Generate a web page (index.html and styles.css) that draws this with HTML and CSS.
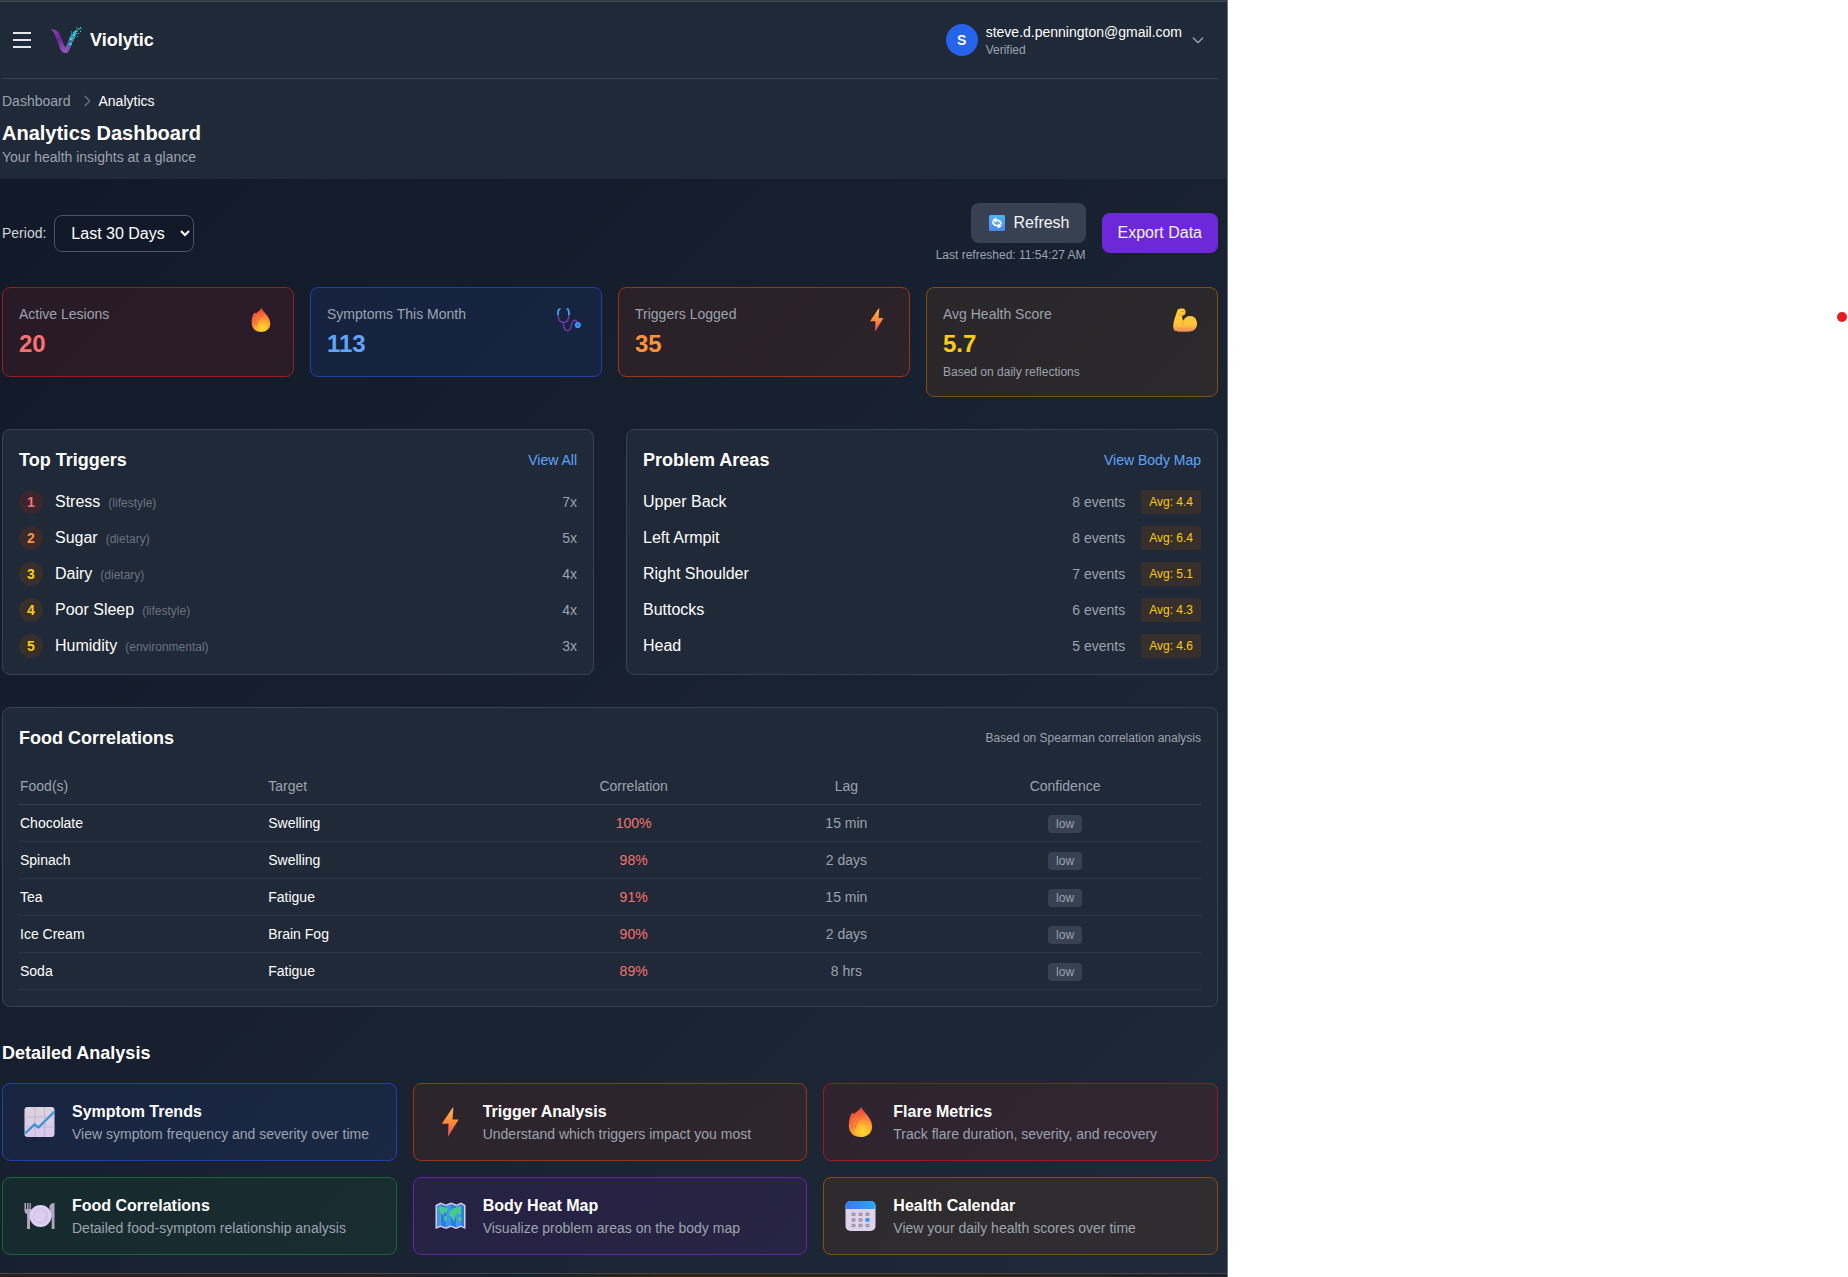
FILE: index.html
```html
<!DOCTYPE html>
<html lang="en">
<head>
<meta charset="utf-8">
<meta name="viewport" content="width=device-width, initial-scale=1">
<title>Analytics Dashboard - Violytic</title>
<link rel="stylesheet" href="styles.css">
</head>
<body>
<svg class="sprite" aria-hidden="true">
  <defs>
    <radialGradient id="g-fire" gradientUnits="userSpaceOnUse" cx="14" cy="20" r="19">
      <stop offset="0" stop-color="#ffdc32"/><stop offset=".3" stop-color="#ffb431"/><stop offset=".6" stop-color="#fb7d3a"/><stop offset="1" stop-color="#e8403c"/>
    </radialGradient>
    <linearGradient id="g-bolt" x1="0" y1="0" x2="0" y2="1">
      <stop offset="0" stop-color="#ffb844"/><stop offset=".5" stop-color="#ff8a3c"/><stop offset="1" stop-color="#f0405a"/>
    </linearGradient>
    <linearGradient id="g-arm" x1="0" y1="0" x2="0" y2="1">
      <stop offset="0" stop-color="#ffcf33"/><stop offset=".7" stop-color="#ffc43c"/><stop offset="1" stop-color="#e8895a"/>
    </linearGradient>
    <linearGradient id="g-paper" x1="0" y1="0" x2="0" y2="1">
      <stop offset="0" stop-color="#dcd3dd"/><stop offset="1" stop-color="#d9c8f0"/>
    </linearGradient>
    <linearGradient id="g-blue" x1="0" y1="0" x2="1" y2="0">
      <stop offset="0" stop-color="#3a78f0"/><stop offset="1" stop-color="#2aa8fb"/>
    </linearGradient>
    <linearGradient id="g-ref" x1="0" y1="0" x2="0" y2="1">
      <stop offset="0" stop-color="#4fb4f8"/><stop offset="1" stop-color="#4a86ee"/>
    </linearGradient>
    <linearGradient id="g-v1" x1="0" y1="0" x2=".6" y2="1">
      <stop offset="0" stop-color="#9a3fb4"/><stop offset=".5" stop-color="#672a96"/><stop offset="1" stop-color="#8f55b8"/>
    </linearGradient>
    <linearGradient id="g-v2" gradientUnits="userSpaceOnUse" x1="17" y1="28" x2="28" y2="5">
      <stop offset="0" stop-color="#8350b4"/><stop offset=".4" stop-color="#4b6fae"/><stop offset="1" stop-color="#27c6c4"/>
    </linearGradient>
  </defs>
  <symbol id="i-fire" viewBox="0 0 24 24">
    <path fill="url(#g-fire)" d="M12.6 0C14 4 21.3 8.500 21.300 15.500C21.300 21 17 24 12 24S2.700 21 2.700 15C2.700 11 3.600 6.500 5.200 5C6 4.600 6.800 4.900 7.300 5.700C7.800 3.800 10.600 3.200 12.600 0Z"/>
    <path fill="none" stroke="#f0503c" stroke-width=".8" stroke-linecap="round" d="M13 5C10 8 5.500 11 5.200 17M7.300 5.800C6.500 8.500 4.200 10 3.800 14M14 7C11 10 8 12 7.500 17"/>
  </symbol>
  <symbol id="i-steth" viewBox="0 0 24 24">
    <path fill="none" stroke="#7038a4" stroke-width="1.500" d="M1 6C1 11 3 14.500 6.500 14.500S12 11 12 6M6.500 14.500C6.500 20 7.500 22.700 10.500 22.700C15.500 22.700 13.500 12.300 17.500 12.300C19.500 12.300 20 14 20.700 16"/>
    <path fill="none" stroke="#39a6f5" stroke-width="1.800" d="M3.500 1.200C1.500 .800 1 2 1 7M9.500 1.200C11.500 .800 12 2 12 7"/>
    <circle cx="20.800" cy="17" r="3.100" fill="#3a93fb"/><circle cx="20.800" cy="17" r="1.200" fill="#2a6be0"/>
  </symbol>
  <symbol id="i-bolt" viewBox="0 0 24 24">
    <path fill="url(#g-bolt)" d="M13.800 .300L5 13.300H10.400L10 23.700L18.500 10H13.600L14.300 .600Z"/>
  </symbol>
  <symbol id="i-arm" viewBox="0 0 24 24">
    <path fill="url(#g-arm)" d="M4.500 2C5.500 .300 10.500 0 11.800 1.500C13 3 12.800 6 11.300 7L9.300 7.500C8.800 9.500 9.500 11.500 10.500 12.500C11.800 9.500 14 8 17 8C21.500 8 24 11.500 24 15.500C24 20.500 21 23.700 15 23.700H6C2 23.700 .200 22 .200 18.500C.200 12.500 2.800 8 4.500 2Z"/>
    <path fill="none" stroke="#e8952c" stroke-width=".9" stroke-linecap="round" d="M6 6.500C8 7.600 10 7.300 11.500 6.600M10.500 12.500C9.300 14 9 15.500 9.500 17M8.500 3.500H11"/>
  </symbol>
  <symbol id="i-refresh" viewBox="0 0 16 16">
    <rect width="16" height="16" rx="1.500" fill="url(#g-ref)"/>
    <path fill="none" stroke="#fff" stroke-width="1.800" d="M12.200 9.500C12 6.500 10.500 5.200 6.500 5.200M3.800 6.500C4 9.500 5.500 10.800 9.500 10.800"/>
    <path fill="#fff" d="M3.200 5.200L7.200 2.300V8ZM12.800 10.800L8.800 8V13.700Z"/>
  </symbol>
  <symbol id="i-chart" viewBox="0 0 30 30">
    <rect width="30" height="30" rx="3" fill="url(#g-paper)"/>
    <path stroke="#c3b9ca" stroke-width="1.200" d="M10.500 0V30M20 0V30M0 10H30M0 20H30"/>
    <path fill="none" stroke="#3a93d8" stroke-width="2.300" d="M.5 26.500L10 17.500L14 20.500L30 4.500"/>
  </symbol>
  <symbol id="i-plate" viewBox="0 0 30 30">
    <path fill="#b3a6bd" d="M0 2H1.500V8H2.600V2H4V8H5V2H6.300V8H7.300V10C7.300 11.500 6.500 12.500 5.500 13V28H2.600V13C1 12.500 0 11.500 0 10ZM30 2V28H27.200V16H25V6C25 3.500 27 2 30 2Z"/>
    <circle cx="16" cy="15" r="11" fill="#dccff0"/><circle cx="16" cy="15" r="7.500" fill="#cdbde2"/><circle cx="15.500" cy="15" r="6.500" fill="#dccdf0"/>
  </symbol>
  <symbol id="i-map" viewBox="0 0 30 30">
    <path fill="#d9cce6" d="M0 4L5 1.500L10.500 3.500L15.500 1.500L21 3.500L25.500 1.500L30 4V28L25.500 26L20.500 28L15.500 26L10.500 28L5 26L0 28Z"/>
    <path fill="#3c97f0" d="M1.500 5L5 3V24.500L1.500 26ZM10.500 5L15.500 3V24.500L10.500 26.500ZM20.700 5L25.500 3V24.500L20.700 26.500Z"/>
    <path fill="#2c7ed8" d="M5 3L10.500 5V26.500L5 24.500ZM15.500 3L20.700 5V26.500L15.500 24.500ZM25.500 3L28.500 5V26L25.500 24.500Z"/>
    <path fill="#45c98c" d="M3 7L6 5.500L10 6.500L12.500 8L11 11L8.500 12L8 14.500L5.500 12.500L4 9.500ZM8.500 15L11.500 16L11 19L9.500 21L8.500 18ZM14 11L17 7.500L21 6.500L25.500 5.500L26 12L24 14L21 12.500L20 16L18 20.500L16 16L13.500 14.500ZM22.500 16H26V20H22.500Z"/>
  </symbol>
  <symbol id="i-calendar" viewBox="0 0 30 30">
    <rect width="30" height="30" rx="5" fill="#e0d4ec"/>
    <path fill="url(#g-blue)" d="M0 8V5Q0 0 5 0H25Q30 0 30 5V8Z"/>
    <path fill="#a698ae" d="M6 11.500H10V15H6ZM13 11.500H17V15H13ZM20 11.500H24V15H20ZM6 17.200H10V20.700H6ZM13 17.200H17V20.700H13ZM6 22.800H10V26.300H6ZM13 22.800H17V26.300H13ZM20 22.800H24V26.300H20Z"/>
    <path fill="#2e90fa" d="M20 17.200H24V20.700H20Z"/>
  </symbol>
</svg>

<div class="page">
  <div class="app">
    <div class="edge edge-top"></div>
    <header class="header">
      <div class="topbar">
        <button class="menu-btn" type="button" aria-label="Open menu">
          <svg width="24" height="24" viewBox="0 0 24 24" fill="none" stroke="#e5e7eb" stroke-width="2"><path d="M3 5H21M3 12H21M3 19H21"/></svg>
        </button>
        <a class="brand" href="#">
          <svg width="32" height="32" viewBox="0 0 32 32" aria-hidden="true">
            <path fill="url(#g-v2)" d="M13.500 26C17 22 18 17 19.500 13C21 9 24 6.500 28 5.500C27 10 24.500 15 22.500 19C20 24 19 28.500 15.500 29Z"/>
            <path fill="url(#g-v1)" d="M.5 5.500C5 5 8 6.500 9.500 10L14.500 22C15.300 24 16.500 26 19 26.500C18 28.500 16.500 29 15 28.900C12.500 28.700 11 27 10 24.500L5 11.500C4 9 3 6.500 .5 5.500Z"/>
            <path fill="#212b3b" d="M20 11h1v1h-1zM24 15h1v1h-1zM22 9h1v1h-1zM25 11h1v1h-1zM22 18h1v1h-1zM26 8h1v1h-1zM19 17h1v1h-1z"/>
            <path fill="#35e0d6" d="M28 4h1.500v1.500H28zM30.500 4.500h1v1h-1zM30 7h1v1h-1zM28 9h1v1h-1zM26 3.500h1v1h-1zM27 12h1v1h-1zM23 10h2v2h-2zM20 14h2v2h-2zM19.500 19h2v2h-2zM25 7h1.500v1.500H25zM22.500 14h1v1h-1zM30 3h1v1h-1zM21 7.500h1v1h-1z"/>
          </svg>
          <span>Violytic</span>
        </a>
        <button class="user" type="button">
          <span class="avatar">S</span>
          <span class="user-text">
            <span class="user-mail">steve.d.pennington@gmail.com</span>
            <span class="user-state">Verified</span>
          </span>
          <svg width="16" height="16" viewBox="0 0 24 24" fill="none" stroke="#9ca3af" stroke-width="2" stroke-linecap="round" stroke-linejoin="round"><path d="M19 9l-7 7-7-7"/></svg>
        </button>
      </div>
      <div class="heading">
        <nav class="crumbs" aria-label="Breadcrumb">
          <a href="#">Dashboard</a>
          <svg width="16" height="16" viewBox="0 0 24 24" fill="none" stroke="#6b7280" stroke-width="2" stroke-linecap="round" stroke-linejoin="round"><path d="M9 5l7 7-7 7"/></svg>
          <span>Analytics</span>
        </nav>
        <h1>Analytics Dashboard</h1>
        <p>Your health insights at a glance</p>
      </div>
    </header>

    <main class="main">
      <div class="toolbar">
        <div class="period">
          <label for="period">Period:</label>
          <select id="period"><option>Last 30 Days</option></select>
        </div>
        <div class="actions">
          <div class="refresh">
            <button class="btn btn-gray" type="button"><svg width="16" height="16"><use href="#i-refresh"/></svg>Refresh</button>
            <span>Last refreshed: 11:54:27 AM</span>
          </div>
          <button class="btn btn-violet" type="button">Export Data</button>
        </div>
      </div>

      <section class="stats">
        <div class="stat red">
          <div><p class="stat-label">Active Lesions</p><p class="stat-value">20</p></div>
          <svg class="stat-icon"><use href="#i-fire"/></svg>
        </div>
        <div class="stat blue">
          <div><p class="stat-label">Symptoms This Month</p><p class="stat-value">113</p></div>
          <svg class="stat-icon"><use href="#i-steth"/></svg>
        </div>
        <div class="stat orange">
          <div><p class="stat-label">Triggers Logged</p><p class="stat-value">35</p></div>
          <svg class="stat-icon"><use href="#i-bolt"/></svg>
        </div>
        <div class="stat yellow">
          <div><p class="stat-label">Avg Health Score</p><p class="stat-value">5.7</p><p class="stat-note">Based on daily reflections</p></div>
          <svg class="stat-icon"><use href="#i-arm"/></svg>
        </div>
      </section>

      <div class="panels">
        <section class="panel">
          <div class="panel-head"><h2>Top Triggers</h2><a href="#">View All</a></div>
          <ol class="rows">
            <li><span class="rank rank-1">1</span><span class="name">Stress</span><small>(lifestyle)</small><span class="count">7x</span></li>
            <li><span class="rank rank-2">2</span><span class="name">Sugar</span><small>(dietary)</small><span class="count">5x</span></li>
            <li><span class="rank">3</span><span class="name">Dairy</span><small>(dietary)</small><span class="count">4x</span></li>
            <li><span class="rank">4</span><span class="name">Poor Sleep</span><small>(lifestyle)</small><span class="count">4x</span></li>
            <li><span class="rank">5</span><span class="name">Humidity</span><small>(environmental)</small><span class="count">3x</span></li>
          </ol>
        </section>
        <section class="panel">
          <div class="panel-head"><h2>Problem Areas</h2><a href="#">View Body Map</a></div>
          <ul class="rows">
            <li><span class="name">Upper Back</span><span class="count">8 events</span><span class="avg">Avg: 4.4</span></li>
            <li><span class="name">Left Armpit</span><span class="count">8 events</span><span class="avg">Avg: 6.4</span></li>
            <li><span class="name">Right Shoulder</span><span class="count">7 events</span><span class="avg">Avg: 5.1</span></li>
            <li><span class="name">Buttocks</span><span class="count">6 events</span><span class="avg">Avg: 4.3</span></li>
            <li><span class="name">Head</span><span class="count">5 events</span><span class="avg">Avg: 4.6</span></li>
          </ul>
        </section>
      </div>

      <section class="panel">
        <div class="panel-head"><h2>Food Correlations</h2><span>Based on Spearman correlation analysis</span></div>
        <table class="foods">
          <colgroup><col class="c-food"><col class="c-target"><col class="c-corr"><col class="c-lag"><col class="c-conf"></colgroup>
          <thead>
            <tr><th scope="col">Food(s)</th><th scope="col">Target</th><th scope="col">Correlation</th><th scope="col">Lag</th><th scope="col">Confidence</th></tr>
          </thead>
          <tbody>
            <tr><td>Chocolate</td><td>Swelling</td><td class="corr">100%</td><td class="lag">15 min</td><td><span class="low">low</span></td></tr>
            <tr><td>Spinach</td><td>Swelling</td><td class="corr">98%</td><td class="lag">2 days</td><td><span class="low">low</span></td></tr>
            <tr><td>Tea</td><td>Fatigue</td><td class="corr">91%</td><td class="lag">15 min</td><td><span class="low">low</span></td></tr>
            <tr><td>Ice Cream</td><td>Brain Fog</td><td class="corr">90%</td><td class="lag">2 days</td><td><span class="low">low</span></td></tr>
            <tr><td>Soda</td><td>Fatigue</td><td class="corr">89%</td><td class="lag">8 hrs</td><td><span class="low">low</span></td></tr>
          </tbody>
        </table>
      </section>

      <section class="details">
        <h2>Detailed Analysis</h2>
        <div class="links">
          <a class="link blue" href="#"><svg><use href="#i-chart"/></svg><div><h3>Symptom Trends</h3><p>View symptom frequency and severity over time</p></div></a>
          <a class="link orange" href="#"><svg><use href="#i-bolt"/></svg><div><h3>Trigger Analysis</h3><p>Understand which triggers impact you most</p></div></a>
          <a class="link red" href="#"><svg><use href="#i-fire"/></svg><div><h3>Flare Metrics</h3><p>Track flare duration, severity, and recovery</p></div></a>
          <a class="link green" href="#"><svg><use href="#i-plate"/></svg><div><h3>Food Correlations</h3><p>Detailed food-symptom relationship analysis</p></div></a>
          <a class="link purple" href="#"><svg><use href="#i-map"/></svg><div><h3>Body Heat Map</h3><p>Visualize problem areas on the body map</p></div></a>
          <a class="link yellow" href="#"><svg><use href="#i-calendar"/></svg><div><h3>Health Calendar</h3><p>View your daily health scores over time</p></div></a>
        </div>
      </section>
    </main>
    <div class="edge edge-bottom"></div>
  </div>
  <aside class="side"><span class="dot"></span></aside>
</div>
</body>
</html>
```
FILE: styles.css
```css
* {
  box-sizing: border-box;
  margin: 0;
  padding: 0;
}

body {
  background: #fff;
  color: #f3f4f6;
  font: 16px/24px "Liberation Sans", Arial, sans-serif;
}

a {
  color: inherit;
  text-decoration: none;
}

button,
select {
  font: inherit;
  color: inherit;
}

button {
  border: 0;
  background: none;
  cursor: pointer;
}

svg {
  display: block;
  flex: none;
}

ol,
ul {
  list-style: none;
}

.sprite {
  position: absolute;
  width: 0;
  height: 0;
}

.page {
  display: grid;
  grid-template-columns: 1228fr 620fr;
}

.app {
  border-right: 1px solid #6b7280;
  background: linear-gradient(135deg, #111827, #1f2937);
}

.edge-top {
  height: 2px;
  background: #283f3c;
  border-bottom: 1px solid #3d4853;
}

.edge-bottom {
  height: 4px;
  background: linear-gradient(90deg, #2c201e, #2a1f20 30%, #14222c 42%, #33240f 55%, #2a2318 80%, #1e1f26);
  border-top: 1px solid #45474c;
}

/* Header */

.header {
  padding: 0 9px 0 2px;
  background: #1f2937;
}

.topbar {
  display: flex;
  align-items: center;
  height: 77px;
  border-bottom: 1px solid #374151;
}

.menu-btn {
  padding: 8px;
}

.brand {
  display: flex;
  align-items: center;
  gap: 8px;
  margin-left: 8px;
  color: #fff;
  font-size: 18px;
  font-weight: 700;
}

.user {
  display: flex;
  align-items: center;
  gap: 8px;
  margin-left: auto;
  padding-right: 12px;
  text-align: left;
}

.avatar {
  width: 32px;
  border-radius: 50%;
  background: #2563eb;
  color: #fff;
  font-size: 14px;
  font-weight: 700;
  line-height: 32px;
  text-align: center;
}

.user-text {
  display: grid;
}

.user-mail {
  color: #fff;
  font-size: 14px;
  line-height: 20px;
}

.user-state {
  color: #9ca3af;
  font-size: 12px;
  line-height: 16px;
}

.heading {
  padding: 12px 0;
}

.crumbs {
  display: flex;
  align-items: center;
  margin-bottom: 8px;
  color: #9ca3af;
  font-size: 14px;
  line-height: 20px;
}

.crumbs svg {
  margin: 0 4px 0 8px;
}

.crumbs span {
  color: #fff;
}

.heading h1 {
  color: #fff;
  font-size: 20px;
  line-height: 28px;
}

.heading p {
  color: #9ca3af;
  font-size: 14px;
  line-height: 20px;
}

/* Content */

.main {
  display: grid;
  gap: 32px;
  padding: 24px 9px 18px 2px;
}

.toolbar {
  display: flex;
  align-items: center;
  justify-content: space-between;
  margin-bottom: -8px;
}

.period {
  display: flex;
  align-items: center;
  gap: 8px;
}

.period label {
  color: #d1d5db;
  font-size: 14px;
}

.period select {
  height: 37px;
  padding: 8px 12px;
  border: 1px solid #4b5563;
  border-radius: 8px;
  background: #111827;
  color: #fff;
  line-height: normal;
}

.actions {
  display: flex;
  align-items: center;
  gap: 16px;
}

.refresh {
  display: flex;
  flex-direction: column;
  align-items: flex-end;
  gap: 4px;
  color: #9ca3af;
  font-size: 12px;
  line-height: 16px;
}

.btn {
  display: flex;
  align-items: center;
  gap: 8px;
  padding: 8px 16px;
  border-radius: 8px;
  color: #f3f4f6;
  font-size: 16px;
  line-height: 24px;
}

.btn-gray {
  padding-left: 18px;
  background: #374151;
}

.btn-violet {
  background: #6d28d9;
}

.red {
  --tint: rgba(127, 29, 29, .2);
  --line: #991b1b;
  --value: #f87171;
}

.blue {
  --tint: rgba(30, 58, 138, .2);
  --line: #1e40af;
  --value: #60a5fa;
}

.orange {
  --tint: rgba(124, 45, 18, .2);
  --line: #9a3412;
  --value: #fb923c;
}

.yellow {
  --tint: rgba(113, 63, 18, .2);
  --line: #854d0e;
  --value: #facc15;
}

.green {
  --tint: rgba(20, 83, 45, .2);
  --line: #166534;
}

.purple {
  --tint: rgba(88, 28, 135, .2);
  --line: #6b21a8;
}

.stats {
  display: grid;
  grid-template-columns: repeat(4, 1fr);
  align-items: start;
  gap: 16px;
}

.stat {
  display: flex;
  justify-content: space-between;
  padding: 16px;
  border: 1px solid var(--line);
  border-radius: 8px;
  background: var(--tint);
}

.stat-label {
  margin-bottom: 4px;
  color: #9ca3af;
  font-size: 14px;
  line-height: 20px;
}

.stat-value {
  color: var(--value);
  font-size: 24px;
  font-weight: 700;
  line-height: 32px;
}

.stat-note {
  margin-top: 4px;
  color: #9ca3af;
  font-size: 12px;
  line-height: 16px;
}

.stat-icon {
  width: 32px;
  height: 32px;
  padding: 4px;
}

.panels {
  display: grid;
  grid-template-columns: 1fr 1fr;
  gap: 32px;
}

.panel {
  padding: 16px;
  border: 1px solid #374151;
  border-radius: 8px;
  background: #1f2937;
}

.panel-head {
  display: flex;
  align-items: center;
  justify-content: space-between;
  margin-bottom: 16px;
}

h2 {
  color: #fff;
  font-size: 18px;
  line-height: 28px;
}

.panel-head a {
  color: #60a5fa;
  font-size: 14px;
  line-height: 20px;
}

.panel-head span {
  color: #9ca3af;
  font-size: 12px;
  line-height: 16px;
}

.rows {
  display: grid;
  gap: 12px;
}

.rows li {
  display: flex;
  align-items: center;
}

.rank {
  width: 24px;
  margin-right: 12px;
  border-radius: 50%;
  background: rgba(113, 63, 18, .3);
  color: #facc15;
  font-size: 14px;
  font-weight: 700;
  text-align: center;
}

.rank-1 {
  background: rgba(127, 29, 29, .3);
  color: #f87171;
}

.rank-2 {
  background: rgba(124, 45, 18, .3);
  color: #fb923c;
}

.name {
  color: #fff;
}

.rows small {
  margin-left: 8px;
  padding-top: 2px;
  color: #6b7280;
  font-size: 12px;
  line-height: 16px;
}

.count {
  margin-left: auto;
  color: #9ca3af;
  font-size: 14px;
}

.avg {
  margin-left: 16px;
  padding: 4px 8px;
  border-radius: 4px;
  background: rgba(113, 63, 18, .3);
  color: #facc15;
  font-size: 12px;
  line-height: 16px;
}

.foods {
  width: 100%;
  border-spacing: 0;
  table-layout: fixed;
  font-size: 14px;
  line-height: 20px;
}

.c-food {
  width: 21%;
}

.c-target {
  width: 20%;
}

.c-corr {
  width: 22%;
}

.c-lag {
  width: 14%;
}

.c-conf {
  width: 23%;
}

.foods th,
.foods td {
  padding: 8px 0;
  text-align: center;
}

.foods th {
  border-bottom: 1px solid #374151;
  color: #9ca3af;
  font-weight: 400;
}

.foods td {
  border-bottom: 1px solid rgba(55, 65, 81, .5);
  color: #fff;
}

.foods th:nth-child(-n + 2),
.foods td:nth-child(-n + 2) {
  padding-left: 1px;
  text-align: left;
}

.foods .corr {
  color: #f87171;
}

.foods .lag {
  color: #9ca3af;
}

.low {
  padding: 2px 8px;
  border-radius: 4px;
  background: #374151;
  color: #9ca3af;
  font-size: 12px;
  line-height: 16px;
}

.details h2 {
  margin-bottom: 16px;
}

.links {
  display: grid;
  grid-template-columns: repeat(3, 1fr);
  gap: 16px;
}

.link {
  display: flex;
  align-items: center;
  gap: 12px;
  padding: 16px;
  border: 1px solid var(--line);
  border-radius: 8px;
  background: var(--tint);
}

.link svg {
  width: 41px;
  height: 30px;
}

.link h3 {
  color: #fff;
  font-size: 16px;
  line-height: 24px;
}

.link p {
  color: #9ca3af;
  font-size: 14px;
  line-height: 20px;
}

/* Blank area beside the app */

.side {
  display: flex;
  justify-content: flex-end;
  padding: 312px 1px 0 0;
}

.dot {
  width: 10px;
  height: 10px;
  border-radius: 50%;
  background: #e81c1f;
}
```
